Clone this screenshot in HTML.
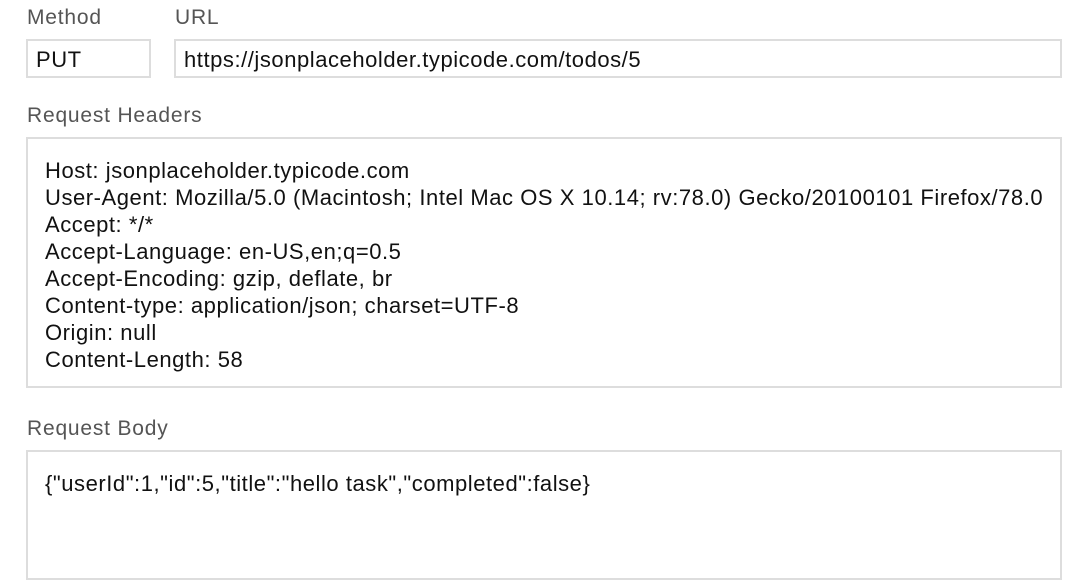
<!DOCTYPE html>
<html><head><style>
body{margin:0;width:1080px;height:554px;overflow:hidden;background:#fff;font-family:"Liberation Sans",sans-serif;}
.l{position:absolute;color:#555;font-size:21px;letter-spacing:0.8px;}
.b{position:absolute;border:2px solid #ddd;box-sizing:border-box;color:#111;font-size:22px;letter-spacing:0.55px;white-space:nowrap;}
</style></head><body>
<div class="l" style="left:27px;top:6px">Method</div>
<div class="l" style="left:175px;top:6px">URL</div>
<div class="b" style="left:26px;top:39px;width:125px;height:39px;padding:6px 0 0 8px">PUT</div>
<div class="b" style="left:174px;top:39px;width:888px;height:39px;padding:6px 0 0 8px">https://jsonplaceholder.typicode.com/todos/5</div>
<div class="l" style="left:27px;top:104px">Request Headers</div>
<div class="b" style="left:26px;top:137px;width:1036px;height:251px;padding:18px 0 0 17px;line-height:27px">Host: jsonplaceholder.typicode.com<br>User-Agent: Mozilla/5.0 (Macintosh; Intel Mac OS X 10.14; rv:78.0) Gecko/20100101 Firefox/78.0<br>Accept: */*<br>Accept-Language: en-US,en;q=0.5<br>Accept-Encoding: gzip, deflate, br<br>Content-type: application/json; charset=UTF-8<br>Origin: null<br>Content-Length: 58</div>
<div class="l" style="left:27px;top:417px">Request Body</div>
<div class="b" style="left:26px;top:450px;width:1036px;height:130px;padding:18px 0 0 17px;line-height:27px">{"userId":1,"id":5,"title":"hello task","completed":false}</div>
</body></html>
